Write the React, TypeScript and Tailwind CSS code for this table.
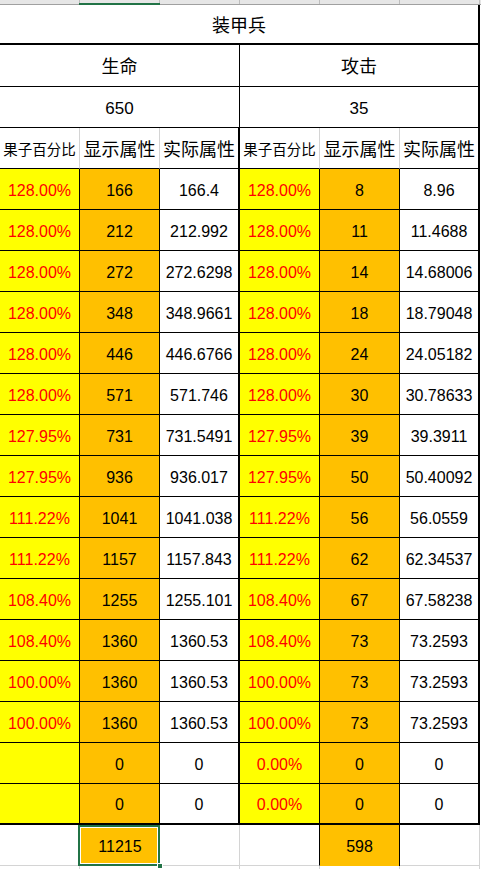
import React from "react";

const num = "font-['Liberation_Sans',Arial,sans-serif] text-[16px]";
const cjk = "font-['Noto_Sans_CJK_SC',sans-serif]";

type Row = [string, string, string, string, string, string];

const rows: Row[] = [
  ["128.00%", "166", "166.4", "128.00%", "8", "8.96"],
  ["128.00%", "212", "212.992", "128.00%", "11", "11.4688"],
  ["128.00%", "272", "272.6298", "128.00%", "14", "14.68006"],
  ["128.00%", "348", "348.9661", "128.00%", "18", "18.79048"],
  ["128.00%", "446", "446.6766", "128.00%", "24", "24.05182"],
  ["128.00%", "571", "571.746", "128.00%", "30", "30.78633"],
  ["127.95%", "731", "731.5491", "127.95%", "39", "39.3911"],
  ["127.95%", "936", "936.017", "127.95%", "50", "50.40092"],
  ["111.22%", "1041", "1041.038", "111.22%", "56", "56.0559"],
  ["111.22%", "1157", "1157.843", "111.22%", "62", "62.34537"],
  ["108.40%", "1255", "1255.101", "108.40%", "67", "67.58238"],
  ["108.40%", "1360", "1360.53", "108.40%", "73", "73.2593"],
  ["100.00%", "1360", "1360.53", "100.00%", "73", "73.2593"],
  ["100.00%", "1360", "1360.53", "100.00%", "73", "73.2593"],
  ["", "0", "0", "0.00%", "0", "0"],
  ["", "0", "0", "0.00%", "0", "0"],
];

function DataRow({ row, last }: { row: Row; last: boolean }) {
  const b = last ? "border-b-2" : "border-b";
  return (
    <div className={`flex h-[41px] ${num}`}>
      <div className={`w-[80px] flex items-center justify-center pt-[3px] bg-[#ffff00] text-[#ff0000] border-r border-black ${b}`}>{row[0]}</div>
      <div className={`w-[80px] flex items-center justify-center pt-[3px] bg-[#ffc000] text-black border-r border-black ${b}`}>{row[1]}</div>
      <div className={`w-[80px] flex items-center justify-center pt-[3px] bg-white text-black border-r-2 border-black ${b}`}>{row[2]}</div>
      <div className={`w-[80px] flex items-center justify-center pt-[3px] bg-[#ffff00] text-[#ff0000] border-r border-black ${b}`}>{row[3]}</div>
      <div className={`w-[80px] flex items-center justify-center pt-[3px] bg-[#ffc000] text-black border-r border-black ${b}`}>{row[4]}</div>
      <div className={`w-[80px] flex items-center justify-center pt-[3px] bg-white text-black border-r-2 border-black ${b}`}>{row[5]}</div>
    </div>
  );
}

export default function App() {
  return (
    <div className="w-[481px] h-[869px] bg-white overflow-hidden text-black">
      {/* column header strip */}
      <div className="relative h-[5px] bg-[#e6e6e6] border-b border-[#a0a0a0] flex">
        <div className="w-[80px] border-r border-[#bdbdbd]" />
        <div className="w-[80px] border-r border-[#bdbdbd]" />
        <div className="w-[80px] border-r border-[#bdbdbd]" />
        <div className="w-[80px] border-r border-[#bdbdbd]" />
        <div className="w-[80px] border-r border-[#bdbdbd]" />
        <div className="w-[80px] border-r border-[#bdbdbd]" />
        <div className="absolute left-[79px] top-[3px] w-[81px] h-[2px] bg-[#217346]" />
      </div>

      {/* title */}
      <div className={`w-[480px] h-[40px] flex items-center justify-center border-r-2 border-b-2 border-black text-[18px] ${cjk}`}>
        装甲兵
      </div>

      {/* stat names */}
      <div className={`flex h-[42px] text-[18px] ${cjk}`}>
        <div className="w-[240px] flex items-center justify-center border-r border-b border-black">生命</div>
        <div className="w-[240px] flex items-center justify-center border-r-2 border-b border-black">攻击</div>
      </div>

      {/* base values */}
      <div className={`flex h-[41px] ${num} text-[17px]`}>
        <div className="w-[240px] flex items-center justify-center pt-[3px] border-r border-b border-black">650</div>
        <div className="w-[240px] flex items-center justify-center pt-[3px] border-r-2 border-b border-black">35</div>
      </div>

      {/* column labels */}
      <div className={`flex h-[41px] text-[18px] ${cjk}`}>
        <div className="w-[80px] flex items-center justify-center pt-[1px] border-r border-[#d4d4d4] border-b border-b-black text-[14.5px] whitespace-nowrap overflow-hidden">果子百分比</div>
        <div className="w-[80px] flex items-center justify-center pt-[1px] border-r border-[#d4d4d4] border-b border-b-black">显示属性</div>
        <div className="w-[80px] flex items-center justify-center pt-[1px] border-r-2 border-b border-black">实际属性</div>
        <div className="w-[80px] flex items-center justify-center pt-[1px] border-r border-[#d4d4d4] border-b border-b-black text-[14.5px] whitespace-nowrap overflow-hidden">果子百分比</div>
        <div className="w-[80px] flex items-center justify-center pt-[1px] border-r border-[#d4d4d4] border-b border-b-black">显示属性</div>
        <div className="w-[80px] flex items-center justify-center pt-[1px] border-r-2 border-b border-black">实际属性</div>
      </div>

      {rows.map((r, i) => (
        <DataRow key={i} row={r} last={i === rows.length - 1} />
      ))}

      {/* totals */}
      <div className={`flex h-[41px] ${num}`}>
        <div className="w-[80px] border-r border-b border-[#d4d4d4]" />
        <div className="relative w-[80px] flex items-center justify-center pt-[3px] bg-[#ffc000]">
          11215
          <div className="absolute left-[-2px] top-0 w-[82px] h-[41px] border-2 border-[#217346]">
            <div className="w-full h-full border border-white" />
          </div>
          <div className="absolute right-[-3px] bottom-[-3px] w-[6px] h-[6px] bg-[#217346] border border-white" />
        </div>
        <div className="w-[80px] border-r border-b border-[#d4d4d4]" />
        <div className="w-[80px] border-r border-black border-b border-b-[#d4d4d4]" />
        <div className="w-[80px] flex items-center justify-center pt-[3px] bg-[#ffc000] border-r border-black">598</div>
        <div className="w-[80px] border-r border-b border-[#d4d4d4]" />
      </div>

      <div className="flex h-[4px]">
        <div className="w-[80px] border-r border-[#d4d4d4]" />
        <div className="w-[80px] border-r border-[#d4d4d4]" />
        <div className="w-[80px] border-r border-[#d4d4d4]" />
        <div className="w-[80px] border-r border-[#d4d4d4]" />
        <div className="w-[80px] border-r border-[#d4d4d4]" />
        <div className="w-[80px] border-r border-[#d4d4d4]" />
      </div>
    </div>
  );
}
